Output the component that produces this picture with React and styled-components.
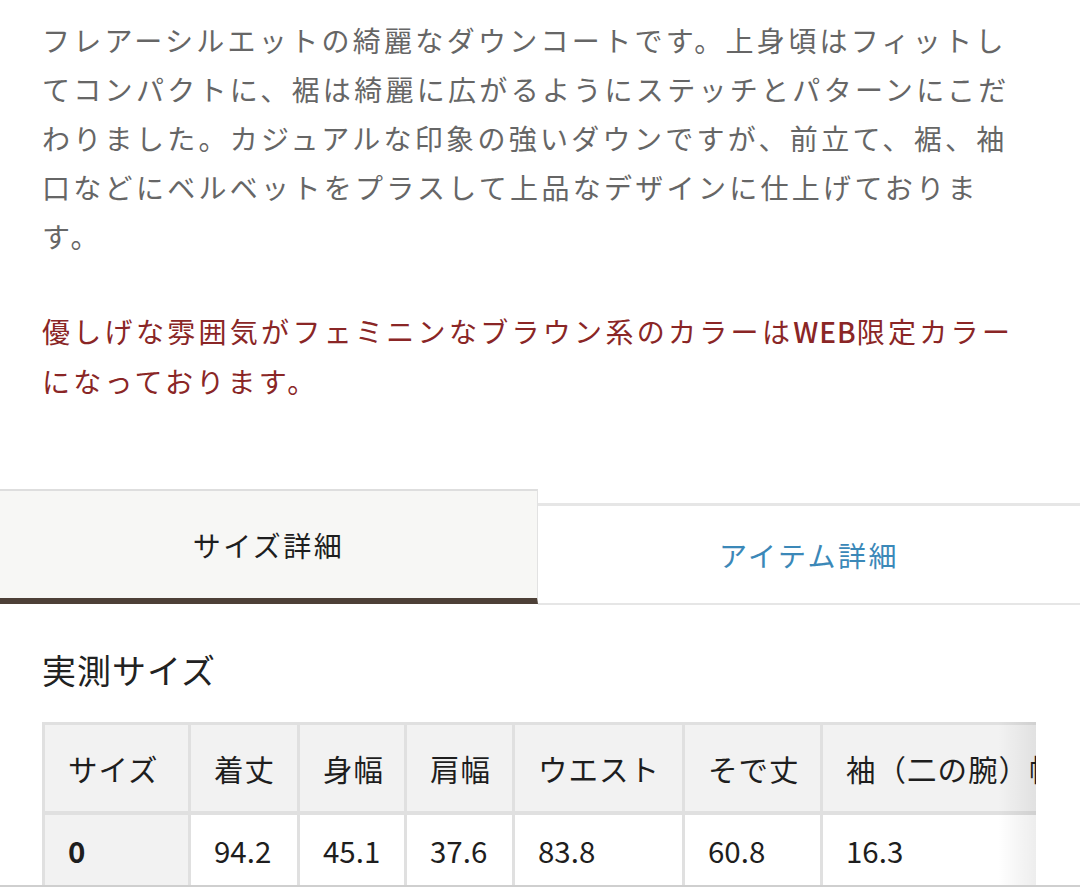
import React from "react";
import styled, { createGlobalStyle } from "styled-components";

const GlobalStyle = createGlobalStyle`
  html, body {
    margin: 0;
    padding: 0;
    background: #fff;
  }
  body {
    font-family: "Noto Sans CJK JP", "Noto Sans", sans-serif;
    color: #222;
  }
`;

const Page = styled.div`
  width: 1080px;
  padding-top: 16px;
  overflow: hidden;
`;

const Section = styled.div`
  padding: 0 44px 0 42px;
`;

const Copy = styled.p`
  margin: ${(p) => p.$top || 0}px 0 0;
  max-width: 980px;
  font-size: 28px;
  letter-spacing: 3.3px;
  line-height: ${(p) => p.$lh || 49}px;
  color: ${(p) => (p.$accent ? "#8a2626" : "#666")};
  line-break: strict;
`;

const Latin = styled.span`
  letter-spacing: 1px;
  font-weight: 500;
`;

const TabBar = styled.div`
  display: flex;
  align-items: flex-end;
  margin-top: 83px;
`;

const Tab = styled.div`
  flex: 0 0 ${(p) => (p.$active ? "538px" : "542px")};
  display: flex;
  align-items: center;
  justify-content: center;
  box-sizing: border-box;
  height: ${(p) => (p.$active ? "115px" : "102px")};
  background: ${(p) => (p.$active ? "#f7f7f5" : "#fff")};
  border-top: ${(p) => (p.$active ? "2px solid #dedede" : "3px solid #e6e6e6")};
  border-right: ${(p) => (p.$active ? "1px solid #e2e2e2" : "none")};
  border-bottom: ${(p) => (p.$active ? "6px solid #4d4037" : "2px solid #e6e6e6")};
  margin-bottom: ${(p) => (p.$active ? "1px" : "0")};
  font-size: 28px;
  letter-spacing: 2.5px;
  color: ${(p) => (p.$active ? "#1e1e1e" : "#3b88b8")};
`;

const Heading = styled.h2`
  margin: 41px 0 0;
  font-size: 34px;
  font-weight: 400;
  line-height: 48px;
  letter-spacing: 1px;
  color: #222;
`;

const TableScroll = styled.div`
  position: relative;
  margin-top: 28px;
  width: 994px;
  overflow: hidden;
`;

const ScrollHint = styled.div`
  position: absolute;
  top: 0;
  right: 0;
  bottom: 0;
  width: 38px;
  background: linear-gradient(to right, rgba(0, 0, 0, 0), rgba(0, 0, 0, 0.07));
  pointer-events: none;
`;

const SizeTable = styled.table`
  border-collapse: collapse;
  table-layout: fixed;
  width: 1040px;
  font-size: 29.5px;
`;

const Cell = styled.td`
  box-sizing: border-box;
  padding: 0 0 0 23px;
  height: ${(p) => (p.$head ? "89px" : "74px")};
  border: 3px solid #e0e0e0;
  border-bottom-width: ${(p) => (p.$head ? "4px" : "3px")};
  background: ${(p) => (p.$shade ? "#f2f2f2" : "#fff")};
  font-weight: ${(p) => (p.$bold ? 700 : 400)};
  letter-spacing: ${(p) => (p.$head ? "1px" : "0")};
  color: #1e1e1e;
  text-align: left;
  white-space: nowrap;
  overflow: hidden;
`;

const BottomRule = styled.div`
  position: fixed;
  left: 0;
  right: 0;
  bottom: 0;
  height: 2px;
  background: #cfcfcf;
`;

const columns = [
  { label: "サイズ", width: 146 },
  { label: "着丈", width: 109 },
  { label: "身幅", width: 107 },
  { label: "肩幅", width: 108 },
  { label: "ウエスト", width: 170 },
  { label: "そで丈", width: 138 },
  { label: "袖（二の腕）幅", width: 262 },
];

const rows = [["0", "94.2", "45.1", "37.6", "83.8", "60.8", "16.3"]];

export default function App() {
  return (
    <>
      <GlobalStyle />
      <Page>
        <Section>
          <Copy>
            フレアーシルエットの綺麗なダウンコートです。上身頃はフィットしてコンパクトに、裾は綺麗に広がるようにステッチとパターンにこだわりました。カジュアルな印象の強いダウンですが、前立て、裾、袖口などにベルベットをプラスして上品なデザインに仕上げております。
          </Copy>
          <Copy $accent $top={45} $lh={50}>
            優しげな雰囲気がフェミニンなブラウン系のカラーは<Latin>WEB</Latin>限定カラーになっております。
          </Copy>
        </Section>

        <TabBar>
          <Tab $active>サイズ詳細</Tab>
          <Tab>アイテム詳細</Tab>
        </TabBar>

        <Section>
          <Heading>実測サイズ</Heading>
          <TableScroll>
            <SizeTable>
              <colgroup>
                {columns.map((c) => (
                  <col key={c.label} style={{ width: c.width }} />
                ))}
              </colgroup>
              <thead>
                <tr>
                  {columns.map((c) => (
                    <Cell as="th" key={c.label} $head $shade>
                      {c.label}
                    </Cell>
                  ))}
                </tr>
              </thead>
              <tbody>
                {rows.map((r) => (
                  <tr key={r[0]}>
                    {r.map((v, i) => (
                      <Cell
                        key={i}
                        as={i === 0 ? "th" : "td"}
                        $shade={i === 0}
                        $bold={i === 0}
                      >
                        {v}
                      </Cell>
                    ))}
                  </tr>
                ))}
              </tbody>
            </SizeTable>
            <ScrollHint />
          </TableScroll>
        </Section>
      </Page>
      <BottomRule />
    </>
  );
}
